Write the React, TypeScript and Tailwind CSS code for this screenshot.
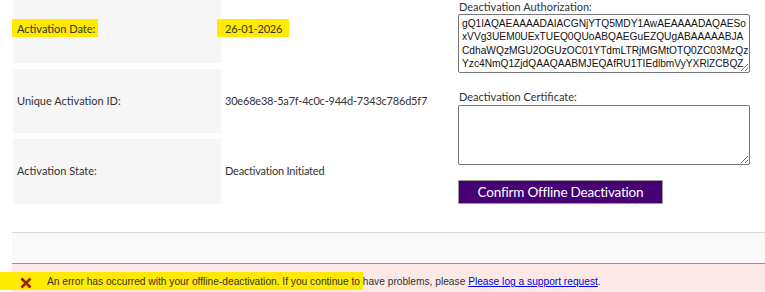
import React from 'react';

const authText = [
  'gQ1IAQAEAAAADAIACGNjYTQ5MDY1AwAEAAAADAQAESo',
  'xVVg3UEM0UExTUEQ0QUoABQAEGuEZQUgABAAAAABJA',
  'CdhaWQzMGU2OGUzOC01YTdmLTRjMGMtOTQ0ZC03MzQz',
  'Yzc4NmQ1ZjdQAAQAABMJEQAfRU1TIEdlbmVyYXRlZCBQZ',
  'WJsaWMgS2V5IENlcnRpZmljYXRlIEZvciBPZmZsaW5lIER',
];

const rows = [
  { label: 'Activation Date:', value: '26-01-2026', mark: true, h: 'h-[70px]' },
  { label: 'Unique Activation ID:', value: '30e68e38-5a7f-4c0c-944d-7343c786d5f7', mark: false, h: 'h-[64px]' },
  { label: 'Activation State:', value: 'Deactivation Initiated', mark: false, h: 'h-[65px]' },
];

const App = () => {
  return (
    <div className="relative w-[765px] h-[292px] overflow-hidden bg-white text-[#333] font-['Lato','Noto_Sans',sans-serif]">
      {/* Top section */}
      <div className="flex h-[204px]">
        {/* Details table */}
        <div className="flex flex-col gap-[6px] -mt-[7px] ml-[13px] w-[445px] shrink-0">
          {rows.map((row) => (
            <div key={row.label} className={`flex items-center ${row.h}`}>
              <div className="w-[208px] h-full bg-[#f6f6f6] flex items-center pl-[4px] text-[11px]">
                {row.mark ? (
                  <span className="bg-[#ffea00] pl-[5px] pr-[3px] -ml-[5px] pt-[3px] pb-[2px] inline-block leading-[13px]">{row.label}</span>
                ) : (
                  <span>{row.label}</span>
                )}
              </div>
              <div className="pl-[4px] text-[11px] tracking-[-0.2px]">
                {row.mark ? (
                  <span className="bg-[#ffea00] pl-[8px] pr-[7px] -ml-[8px] pt-[3px] pb-[2px] inline-block leading-[13px]">{row.value}</span>
                ) : (
                  <span>{row.value}</span>
                )}
              </div>
            </div>
          ))}
        </div>

        {/* Offline deactivation form */}
        <div className="flex flex-col w-[292px] shrink-0">
          <label className="text-[11px] leading-[14px] pl-[1px]">Deactivation Authorization:</label>
          <textarea
            readOnly
            value={authText.join('\n')}
            className="h-[59px] w-[292px] border border-[#777] rounded-[2px] px-[3px] pt-[2px] whitespace-pre overflow-hidden text-[10.2px] leading-[13.3px] text-[#111] font-['Liberation_Sans',Arial,sans-serif]"
          />
          <label className="mt-[17px] text-[11px] leading-[14px] pl-[1px]">Deactivation Certificate:</label>
          <textarea
            readOnly
            className="mt-[1px] h-[60px] w-[292px] border border-[#777] rounded-[2px] overflow-hidden"
          />
          <button className="mt-[15px] w-[205px] h-[24px] bg-[#470073] text-white text-[13.5px] tracking-[-0.2px] border border-[#999] font-['Lato','Noto_Sans',sans-serif]">
            Confirm Offline Deactivation
          </button>
        </div>
      </div>

      {/* Footer band */}
      <div className="mt-[28px] ml-[12px] h-[31px] border-t border-[#dcdcdc] bg-[#f9f9f9]" />

      {/* Error message */}
      <div className="relative ml-[12px] h-[40px] border-t border-[#e0786a] bg-[#fce9e7]">
        <div className="absolute -left-[12px] top-[8px] w-[363px] h-[18px] bg-[#ffea00]" />
        <div className="relative flex items-center h-[36px] pl-[8px] text-[10.2px] text-[#333] font-['Liberation_Sans',Arial,sans-serif]">
          <svg width="12" height="12" viewBox="0 0 12 12" className="shrink-0 mt-[1px]">
            <path d="M1.5 1.5 L10.5 10.5 M10.5 1.5 L1.5 10.5" stroke="#a31b0b" strokeWidth="2.6" strokeLinecap="butt" />
          </svg>
          <span className="ml-[15px]">
            An error has occurred with your offline-deactivation. If you continue to have problems, please{' '}
            <a href="#" className="text-[#0000ee] underline">Please log a support request</a>.
          </span>
        </div>
      </div>
    </div>
  );
};

export default App;
